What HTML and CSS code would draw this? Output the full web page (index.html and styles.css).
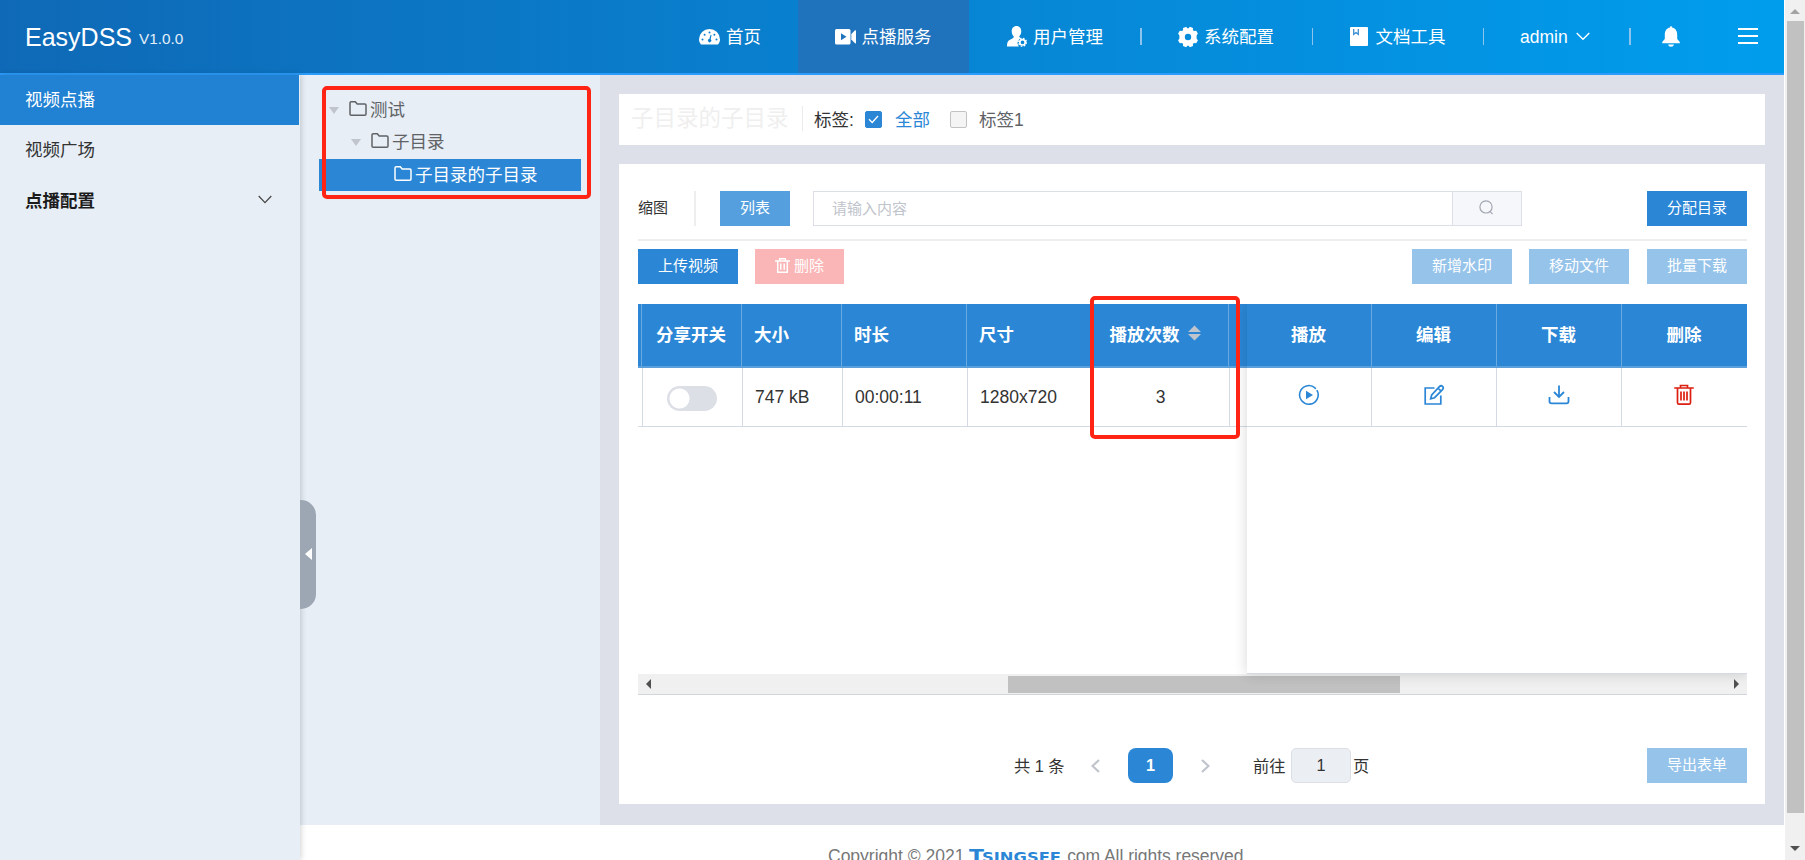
FILE: index.html
```html
<!DOCTYPE html>
<html lang="zh-CN">
<head>
<meta charset="utf-8">
<title>EasyDSS</title>
<link rel="stylesheet" href="styles.css">
</head>
<body>
<div class="viewport">
  <div class="page">
    <header class="topbar">
      <div class="brand">EasyDSS<span class="version">V1.0.0</span></div>
      <nav class="nav">
        <a class="nav-item home">
          <svg width="21" height="16" viewBox="0 0 21 16"><path fill="#fff" d="M2 15.5C.7 14 0 12.300 0 10.300A10.500 10.300 0 0 1 21 10.300C21 12.300 20.300 14 19 15.500Z"/><g fill="#0c7fd0"><circle cx="3.500" cy="10.500" r="1"/><circle cx="5.600" cy="5.700" r="1"/><circle cx="10.500" cy="3.500" r="1"/><circle cx="15.400" cy="5.700" r="1"/><circle cx="17.500" cy="10.500" r="1"/><path d="M11.600 5.800L12.500 6.100L11.700 10.200A1.700 1.700 0 1 1 10.300 9.900Z"/></g></svg>
          <span>首页</span></a>
        <a class="nav-item vod">
          <svg width="21" height="16" viewBox="0 0 21 16"><rect width="15.500" height="15.500" rx="1.500" fill="#fff"/><path fill="#1f72bc" d="M6 4.300L11.500 7.800L6 11.300Z"/><path fill="#fff" d="M16.300 5L20 1.300Q21 .8 21 2V13.500Q21 14.800 20 14.200L16.300 10.500Z"/></svg>
          <span>点播服务</span></a>
        <a class="nav-item user">
          <svg width="20" height="21" viewBox="0 0 20 21"><path fill="#fff" d="M9.500 0C12.500 0 14.300 2.300 14.300 5.300C14.300 7.400 13.400 9.300 12.300 10.300C12.300 11.300 13 11.800 14 12.300A5 5 0 0 0 12 20.500H0C0 17 .4 15 2.500 13.900C4.500 13 6.800 12.500 6.800 10.600C5.500 9.500 4.700 7.500 4.700 5.300C4.700 2.300 6.500 0 9.500 0Z"/><circle cx="15.500" cy="16.300" r="2.700" fill="none" stroke="#fff" stroke-width="1.700"/><circle cx="15.500" cy="16.300" r="3.900" fill="none" stroke="#fff" stroke-width="1.400" stroke-dasharray="1.600 1.460"/></svg>
          <span>用户管理</span></a>
        <i class="sep sep-wide"></i>
        <a class="nav-item system">
          <svg width="22" height="22" viewBox="0 0 22 22"><path fill="#fff" fill-rule="evenodd" d="M8.200 1.200L9.200.8L10.300 2.300H11.700L12.800.8L16 2L15.900 4L17 5.100L19.200 4.800L20.900 7.600L19.600 9.400V12.600L20.900 14.400L19.200 17.200L17 16.900L15.900 18L16 20L12.800 21.200L11.700 19.700H10.300L9.200 21.200L6 20L6.100 18L5 16.900L2.800 17.200L1.100 14.400L2.400 12.600V9.400L1.100 7.600L2.800 4.800L5 5.100L6.100 4L6 2ZM11 7.800A3.200 3.200 0 1 0 11 14.200A3.200 3.200 0 1 0 11 7.800Z"/></svg>
          <span>系统配置</span></a>
        <i class="sep"></i>
        <a class="nav-item docs">
          <svg width="18" height="19" viewBox="0 0 18 19"><rect width="18" height="19" rx="1" fill="#fff"/><path d="M3.700 2V7.300L6 5.500L8.300 7.300V2" fill="none" stroke="#3d8fd2" stroke-width="1.300"/></svg>
          <span>文档工具</span></a>
        <i class="sep"></i>
        <a class="nav-item admin"><span>admin</span>
          <svg width="14" height="9" viewBox="0 0 14 9"><path d="M.7 1L7 7.300L13.300 1" fill="none" stroke="#fff" stroke-width="1.400"/></svg></a>
        <i class="sep sep-wide"></i>
        <a class="nav-item bell"><svg width="18" height="21" viewBox="0 0 18 21"><path fill="#fff" d="M8 1.500Q8 0 9 0T10 1.500C13.500 2.200 15.200 5 15.200 8.500V13L17.800 16V17.300H.2V16L2.800 13V8.500C2.800 5 4.500 2.200 8 1.500ZM6 18.500H12Q11.500 20.800 9 20.800T6 18.500Z"/></svg></a>
        <a class="nav-item burger"><svg width="20" height="16" viewBox="0 0 20 16"><path fill="#fff" d="M0 0H20V2H0ZM0 7H20V9H0ZM0 14H20V16H0Z"/></svg></a>
      </nav>
    </header>

    <div class="body">
      <aside class="sidebar">
        <a class="side-item active">视频点播</a>
        <a class="side-item">视频广场</a>
        <a class="side-item group">点播配置
          <svg width="14" height="9" viewBox="0 0 14 9"><path d="M.7 1L7 7.600L13.300 1" fill="none" stroke="#444" stroke-width="1.200"/></svg></a>
        <div class="collapse"><svg width="7" height="12" viewBox="0 0 7 12"><path d="M7 0V12L0 6Z" fill="#fff"/></svg></div>
      </aside>

      <div class="right">
        <div class="workspace">
          <section class="tree">
            <div class="tree-row level1"><i class="caret"></i>
              <svg class="folder" viewBox="0 0 18 15"><path d="M1 2Q1 .8 2.200 .8H6.300L8.200 3.100H15.800Q17 3.100 17 4.300V13Q17 14.200 15.800 14.200H2.200Q1 14.200 1 13Z"/></svg>测试</div>
            <div class="tree-row level2"><i class="caret"></i>
              <svg class="folder" viewBox="0 0 18 15"><path d="M1 2Q1 .8 2.200 .8H6.300L8.200 3.100H15.800Q17 3.100 17 4.300V13Q17 14.200 15.800 14.200H2.200Q1 14.200 1 13Z"/></svg>子目录</div>
            <div class="tree-row level3 selected">
              <svg class="folder" viewBox="0 0 18 15"><path d="M1 2Q1 .8 2.200 .8H6.300L8.200 3.100H15.800Q17 3.100 17 4.300V13Q17 14.200 15.800 14.200H2.200Q1 14.200 1 13Z"/></svg>子目录的子目录</div>
            <div class="mark mark-tree"></div>
          </section>

          <main class="main">
            <section class="card tags">
              <h2>子目录的子目录</h2>
              <div class="tag-list">
                <span class="tag-label">标签:</span>
                <i class="check on"><svg width="11" height="9" viewBox="0 0 11 9"><path d="M1 4.200L4.200 7.500L10 1" fill="none" stroke="#fff" stroke-width="1.300"/></svg></i>
                <span class="tag-all">全部</span>
                <i class="check"></i>
                <span class="tag-one">标签1</span>
              </div>
            </section>

            <section class="card list">
              <div class="row filter">
                <span class="thumb-tab">缩图</span>
                <button class="btn tab">列表</button>
                <div class="search"><span class="search-input">请输入内容</span>
                  <span class="search-btn"><svg width="15" height="15" viewBox="0 0 15 15"><circle cx="7" cy="6.900" r="6.100" fill="none" stroke="#a3a7b0" stroke-width="1.200"/><path d="M10.600 11.200L13.600 14.200" stroke="#a3a7b0" stroke-width="1.200"/></svg></span></div>
                <button class="btn primary push">分配目录</button>
              </div>
              <div class="row actions">
                <button class="btn primary">上传视频</button>
                <button class="btn danger"><svg width="15" height="15" viewBox="0 0 15 15"><path d="M0 3H15M4.700 3V.8H10.300V3M2.700 3V14.200H12.300V3M5.800 5.500V11.800M9.200 5.500V11.800" fill="none" stroke="#fff" stroke-width="1.500"/></svg>删除</button>
                <button class="btn light push">新增水印</button>
                <button class="btn light move">移动文件</button>
                <button class="btn light">批量下载</button>
              </div>

              <div class="table">
                <div class="panes">
                  <div class="pane-scroll">
                    <div class="tr th">
                      <div class="td edge"></div><div class="td center">分享开关</div><div class="td">大小</div><div class="td">时长</div><div class="td">尺寸</div>
                      <div class="td center plays">播放次数<svg width="13" height="16" viewBox="0 0 13 16"><path d="M0 7L6.500 .5L13 7ZM0 9H13L6.500 15.500Z" fill="#c0c4cc"/></svg></div><div class="td"></div>
                    </div>
                    <div class="tr">
                      <div class="td edge"></div><div class="td center"><i class="switch"></i></div><div class="td">747 kB</div><div class="td">00:00:11</div><div class="td">1280x720</div>
                      <div class="td center">3</div><div class="td"></div>
                    </div>
                  </div>
                  <div class="pane-fixed">
                    <div class="tr th"><div class="td">播放</div><div class="td">编辑</div><div class="td">下载</div><div class="td">删除</div></div>
                    <div class="tr">
                      <div class="td"><svg width="22" height="22" viewBox="0 0 22 22"><path d="M17 3.900A9.300 9.300 0 1 0 18.900 6.200" fill="none" stroke="#2b87d6" stroke-width="1.600"/><circle cx="17.300" cy="4.300" r=".9" fill="#2b87d6"/><path d="M8 6.700L15 11L8 15.300Z" fill="#2b87d6"/></svg></div>
                      <div class="td"><svg width="22" height="22" viewBox="0 0 22 22"><path d="M11.500 4H2.200V20H17.800V11.500" fill="none" stroke="#2b87d6" stroke-width="1.700"/><path d="M7.700 14.800L8.700 11L16.400 2.600Q18 1 19.500 2.400T19.500 5.600L11.600 13.700ZM15 4L18 7.200" fill="none" stroke="#2b87d6" stroke-width="1.700"/></svg></div>
                      <div class="td"><svg width="22" height="22" viewBox="0 0 22 22"><path d="M11 1.500V13M6 8L11 13L16 8M1.500 13V17.500Q1.500 19.300 3.500 19.300H18.500Q20.500 19.300 20.500 17.500V13" fill="none" stroke="#2b87d6" stroke-width="1.800"/></svg></div>
                      <div class="td"><svg width="22" height="22" viewBox="0 0 22 22"><path d="M1.200 4H20.800M7.500 4V1.500H14.500V4M4.500 4V18.700Q4.500 20.200 6 20.200H16Q17.500 20.200 17.500 18.700V4M8 7.500V16.500M11 7.500V16.500M14 7.500V16.500" fill="none" stroke="#dc1f10" stroke-width="1.700"/></svg></div>
                    </div>
                  </div>
                </div>
                <div class="hscroll"><i class="arrow left"></i><i class="hthumb"></i><i class="arrow rightward"></i></div>
              </div>
              <div class="mark mark-plays"></div>

              <div class="row pager">
                <span class="total">共 1 条</span>
                <svg class="prev" width="9" height="14" viewBox="0 0 9 14"><path d="M8 1L1.500 7L8 13" fill="none" stroke="#c0c4cc" stroke-width="2.200"/></svg>
                <span class="current">1</span>
                <svg class="next" width="9" height="14" viewBox="0 0 9 14"><path d="M1 1L7.500 7L1 13" fill="none" stroke="#c0c4cc" stroke-width="2.200"/></svg>
                <span class="jump">前往</span><span class="jump-input">1</span><span class="unit">页</span>
                <button class="btn light push">导出表单</button>
              </div>
            </section>
          </main>
        </div>
        <footer class="footer">Copyright © 2021 <svg class="logo" width="93" height="15" viewBox="0 0 93 15"><g fill="#2b87d6" font-family="DejaVu Sans, sans-serif" font-weight="bold"><text x="0" y="13" font-size="17" textLength="15" lengthAdjust="spacingAndGlyphs">T</text><text x="13" y="13" font-size="13.500" textLength="79" lengthAdjust="spacingAndGlyphs">SINGSEE</text></g></svg><span class="rights">.com All rights reserved.</span></footer>
      </div>
    </div>
  </div>
  <div class="vscroll"><i class="arrow up"></i><i class="vthumb"></i><i class="arrow down"></i></div>
</div>
</body>
</html>
```
FILE: styles.css
```css
* { box-sizing: border-box; }
body {
  margin: 0;
  overflow: hidden;
  font-family: "Liberation Sans", "Noto Sans CJK SC", sans-serif;
  font-size: 17.5px;
  color: #333;
  background: #fff;
}
svg { display: block; flex: none; }
i { display: block; flex: none; }
.viewport { display: flex; width: 1805px; height: 860px; overflow: hidden; }
.page { width: 1785px; flex: none; border-right: 1px solid #fff; }

.topbar {
  display: flex;
  height: 75px;
  border-bottom: 2px solid #2b9cfb;
  background: linear-gradient(90deg, #0f69b6, #009ded);
  color: #fff;
}
.brand { width: 656px; flex: none; padding-left: 25px; font-size: 25px; line-height: 75px; white-space: nowrap; }
.version { margin-left: 7px; font-size: 15.3px; color: #e3eef8; vertical-align: 2px; line-height: 1; }
.nav { display: flex; align-items: center; flex: 1; }
.nav-item { display: flex; align-items: center; height: 73px; flex: none; white-space: nowrap; }
.nav-item span { line-height: 26px; }
.home { width: 142px; padding-left: 43px; gap: 6px; }
.vod { width: 171px; padding-left: 37px; gap: 5.5px; background: #1f72bc; }
.user { width: 171px; padding-left: 38px; gap: 6px; }
.system { width: 170px; padding-left: 35px; gap: 5px; }
.docs { width: 170px; padding-left: 37px; gap: 7.5px; }
.admin { width: 145px; padding-left: 36px; gap: 8px; }
.bell { width: 50px; padding-left: 31px; }
.burger { margin-left: 57px; padding-bottom: 2px; }
.sep { width: 1px; height: 17px; background: #8cc4ee; }
.sep-wide { width: 2px; }

.body { display: flex; height: 785px; }
.sidebar {
  position: relative;
  z-index: 2;
  width: 300px;
  flex: none;
  background: #e7eef6;
  box-shadow: 1px 0 6px rgba(0, 0, 0, .18);
}
.side-item { display: flex; align-items: center; height: 50px; width: 299px; padding: 0 27px 3px 25px; }
.side-item.active { color: #fff; background: #2181d3; }
.side-item.group { justify-content: space-between; height: 52px; font-weight: bold; color: #1c1c1c; }
.collapse {
  position: absolute;
  left: 300px;
  top: 425px;
  display: flex;
  align-items: center;
  width: 16px;
  height: 109px;
  padding: 0 0 2px 5px;
  border-radius: 0 15px 15px 0;
  background: #9da7b3;
}
.right { flex: 1; min-width: 0; }
.workspace { display: flex; height: 750px; background: #dde0e8; }

.tree { position: relative; width: 300px; flex: none; padding: 19px 19px 0; background: #e7eef6; color: #606266; }
.tree-row { display: flex; align-items: center; height: 32.500px; padding-bottom: 3px; }
.tree-row.level1 { padding-left: 11px; }
.tree-row.level2 { padding-left: 33px; padding-bottom: 4px; }
.tree-row.level3 { padding-left: 75px; height: 32px; }
.tree-row.selected { color: #fff; background: #2b87d6; }
.caret { border: 5px solid transparent; border-top: 7px solid #c0c4cc; border-bottom: 0; margin: 4px 10px 0 -1px; }
.folder { width: 18px; height: 15px; margin-right: 3px; fill: none; stroke: currentColor; stroke-width: 1.500; }
.mark { position: absolute; z-index: 5; border: 4px solid #ff2414; border-radius: 5px; }
.mark-tree { left: 21.500px; top: 11px; width: 269px; height: 113px; }

.main { flex: 1; padding: 19px 19px 21px; }
.card { background: #fff; }
.tags { display: flex; align-items: center; height: 51px; padding: 0 12px 2px; margin-bottom: 19px; }
.tags h2 { margin: 0; width: 172px; font-size: 22.500px; font-weight: normal; line-height: 25px; color: #efefef; border-right: 1px solid #ebebeb; white-space: nowrap; }
.tag-list { display: flex; align-items: center; padding-left: 11px; }
.tag-label { width: 51px; }
.check { display: flex; align-items: center; justify-content: center; width: 17px; height: 17px; margin-top: 1px; border: 1px solid #c2c2c2; border-radius: 2px; background: #f4f4f4; }
.check.on { border-color: #2b87d6; background: #2b87d6; }
.tag-all { width: 68px; padding-left: 13px; color: #2b87d6; }
.tag-one { padding-left: 12px; color: #606266; }

.list { position: relative; height: 640px; padding: 0 18px 0 19px; }
.row { display: flex; align-items: center; height: 35px; }
.btn { display: flex; align-items: center; justify-content: center; width: 100px; height: 35px; padding: 0 0 2px; border: 0; font: inherit; font-size: 15px; line-height: 22px; color: #fff; }
.primary { background: #2b87d6; }
.light { background: #95c3ea; }
.danger { width: 89px; gap: 4px; background: #fab6b6; }
.move { margin-right: 1px; }
.push { margin-left: auto; }
.filter { box-sizing: content-box; padding: 27px 0 13px; border-bottom: 2px solid #eee; }
.thumb-tab { width: 58px; height: 35px; line-height: 34px; font-size: 15px; border-right: 2px solid #eee; }
.tab { width: 70px; margin: 0 23px 0 24px; background: #559fde; }
.search { display: flex; width: 709px; height: 35px; border: 1px solid #dcdfe6; font-size: 15px; line-height: 33px; color: #c0c4cc; }
.search-input { flex: 1; padding-left: 18px; }
.search-btn { display: flex; align-items: center; justify-content: center; width: 69px; padding: 0 1px 2px 0; border-left: 1px solid #dcdfe6; background: #f5f7fb; }
.actions { margin-top: 8px; gap: 17px; }

.table { height: 391px; margin-top: 20px; overflow: hidden; border-bottom: 1px solid #d0d6de; }
.panes { display: grid; grid-template-columns: 609px 500px; height: 370px; position: relative; z-index: 1; }
.pane-scroll { overflow: hidden; }
.tr { display: grid; height: 59px; border-bottom: 1px solid #d3dae3; }
.pane-scroll .tr { grid-template-columns: 5px 100px 100px 125px 125px 137px 17px; }
.pane-scroll .tr.th { grid-template-columns: 4px 100px 100px 125px 125px 137px 18px; }
.pane-fixed .tr { grid-template-columns: 125px 125px 125px 125px; }
.tr.th { height: 64px; font-weight: bold; color: #fff; background: #2b87d6; border-bottom: 2px solid #5b9fdb; }
.td { display: flex; align-items: center; padding: 0 0 0 12px; border-right: 1px solid #d3dae3; white-space: nowrap; }
.th .td { padding-bottom: 3px; border-color: #68a9e0; }
.td.edge { padding: 0; }
.td:last-child { border-right: 0; }
.td.center, .pane-fixed .td { justify-content: center; padding-left: 0; padding-right: 1px; }
.th .td.plays { gap: 8px; padding: 0 10px 4px 0; }
.pane-fixed { background: #fff; border-bottom: 1px solid #d3dae3; box-shadow: 0 0 13px rgba(0, 0, 0, .16); }
.pane-fixed svg { margin-bottom: 4px; }
.switch { width: 50px; height: 25px; margin-top: 2px; border-radius: 13px; background: radial-gradient(circle at 12.500px 12.500px, #fff 9.700px, #dcdfe6 10.300px); }
.hscroll { display: flex; align-items: center; height: 20px; padding: 0 8px; background: #f0f0f0; }
.hthumb { width: 392px; height: 17px; margin: 1px auto 0 357px; background: #c1c1c1; }
.arrow { border: 5px solid transparent; }
.left { border-right-color: #505050; border-left: 0; }
.rightward { border-left-color: #505050; border-right: 0; }
.mark-plays { left: 471px; top: 132px; width: 149.500px; height: 143px; }

.pager { margin-top: 53px; padding-left: 376px; font-size: 16.250px; }
.total { width: 77px; padding-bottom: 2px; }
.current { width: 45px; height: 35px; margin: 0 28px 0 28px; border-radius: 8px; background: #2b87d6; color: #fff; font-weight: bold; line-height: 34px; text-align: center; }
.next { margin-right: 43px; }
.jump { width: 38px; padding-bottom: 2px; }
.jump-input { width: 60px; height: 35px; margin-right: 2px; border: 1px solid #dcdfe6; border-radius: 5px; background: #ebeef2; line-height: 32px; text-align: center; }
.unit { width: 17px; padding-bottom: 2px; }

.footer { display: flex; justify-content: flex-start; align-items: flex-start; height: 35px; padding: 21px 0 0 528px; color: #777; line-height: 20px; white-space: pre; overflow: hidden; background: #fff; }
.logo { margin: 3px 0 0 0; }
.rights { letter-spacing: -.03px; }

.vscroll { display: flex; flex-direction: column; align-items: center; width: 20px; flex: none; height: 860px; padding: 9px 0; background: #f0f0f0; }
.vthumb { width: 17px; height: 792px; margin-top: 7px; background: #c1c1c1; }
.up { border-bottom-color: #a3a3a3; border-top: 0; }
.down { margin-top: auto; border-top-color: #505050; border-bottom: 0; }
```
